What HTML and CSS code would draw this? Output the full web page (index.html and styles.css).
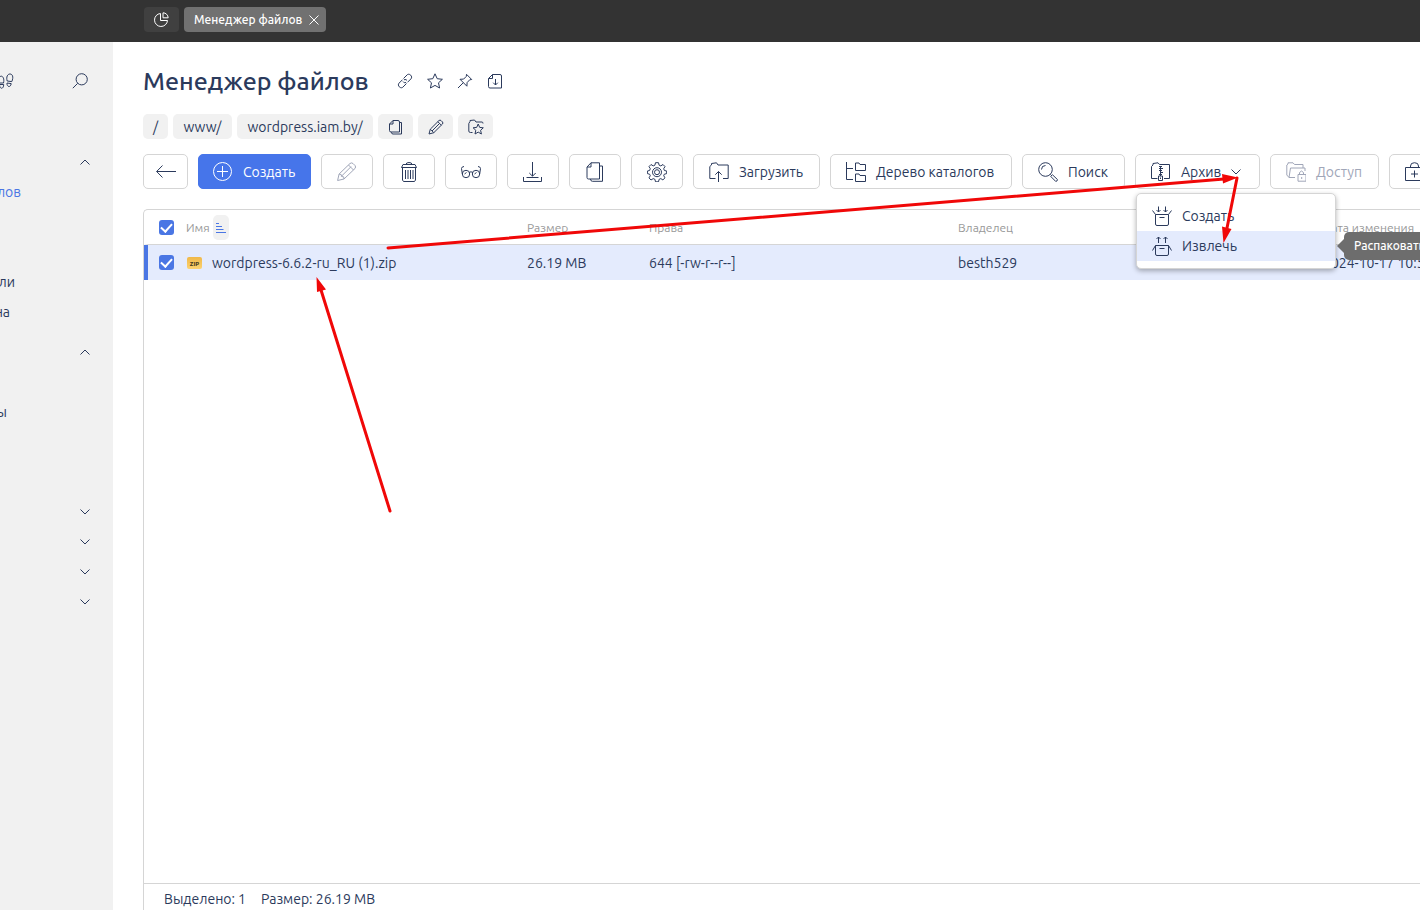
FILE: index.html
```html
<!DOCTYPE html>
<html lang="ru">
<head>
<meta charset="utf-8">
<title>Менеджер файлов</title>
<link rel="stylesheet" href="styles.css">
</head>
<body>
<header class="topbar">
  <button class="tab tab-home" aria-label="Панель"><svg class="ic16" viewBox="0 0 16 16"><path d="M7.500 1.500A6.500 6.500 0 1 0 14.500 8.500H7.500Z"/><path d="M10 .8V5.800H15.200A5.200 5.200 0 0 0 10 .8Z"/></svg></button>
  <button class="tab tab-active">Менеджер файлов <svg class="ic10" viewBox="0 0 10 10"><path d="M.5.5l9 9M9.500.5l-9 9"/></svg></button>
</header>
<div class="layout">
  <nav class="sidebar" aria-label="Меню">
    <div class="side-head">
      <a href="#" class="steps" aria-label="История"><svg class="ic16" viewBox="0 0 16 16"><path d="M1 5C3 1 7 4 5.500 10H1.500ZM1.500 11.500h4.200c0 5-4.200 5-4.200 0Z"/><path d="M9.200 8C8 4 9.500 1 12 1s3.800 3 1.800 7.600ZM9 10l4.200.6c-.5 4.400-4.700 3.400-4.200-.6Z"/></svg></a>
      <button class="plain" aria-label="Поиск по меню"><svg class="ic16" viewBox="0 0 16 16"><circle cx="9.700" cy="6.300" r="5.600"/><path d="M5.700 10.300L.8 15.200"/></svg></button>
    </div>
    <div class="side-row"><button class="plain" aria-label="Свернуть"><svg class="chev" viewBox="0 0 10 6"><path d="M.5 5.500L5 1l4.500 4.500"/></svg></button></div>
    <div class="side-row"><a href="#" class="side-link current">лов</a></div>
    <div class="side-row"></div>
    <div class="side-row"></div>
    <div class="side-row"><a href="#" class="side-link w15">ли</a></div>
    <div class="side-row"><a href="#" class="side-link w10">на</a></div>
    <div class="side-row group"><button class="plain" aria-label="Свернуть"><svg class="chev" viewBox="0 0 10 6"><path d="M.5 5.500L5 1l4.500 4.500"/></svg></button></div>
    <div class="side-row"></div>
    <div class="side-row"><a href="#" class="side-link w7">ы</a></div>
    <div class="side-row"></div>
    <div class="side-row"></div>
    <div class="side-row group"><button class="plain" aria-label="Развернуть"><svg class="chev" viewBox="0 0 10 6"><path d="M.5.5L5 5 9.500.5"/></svg></button></div>
    <div class="side-row"><button class="plain" aria-label="Развернуть"><svg class="chev" viewBox="0 0 10 6"><path d="M.5.5L5 5 9.500.5"/></svg></button></div>
    <div class="side-row"><button class="plain" aria-label="Развернуть"><svg class="chev" viewBox="0 0 10 6"><path d="M.5.5L5 5 9.500.5"/></svg></button></div>
    <div class="side-row"><button class="plain" aria-label="Развернуть"><svg class="chev" viewBox="0 0 10 6"><path d="M.5.5L5 5 9.500.5"/></svg></button></div>
  </nav>
  <main class="content">
    <div class="title-row">
      <h1>Менеджер файлов</h1>
      <div class="title-icons">
        <button class="plain" aria-label="Ссылка"><svg class="ic16" viewBox="0 0 16 16"><path d="M6.500 5.500L10 2c2-2.400 6.200 1.300 4 3.800L10.500 9.300M9.500 10.500L6 14c-2 2.400-6.200-1.300-4-3.800L5.500 6.700M6 8.500Q7 10.500 9 9.500M7 6.700Q9.500 6 10 7.500"/></svg></button>
        <button class="plain" aria-label="В избранное"><svg class="ic16" viewBox="0 0 16 16"><path d="M8 .8l2.200 4.900 5.200.6-3.900 3.500 1.100 5.200L8 12.400 3.400 15l1.100-5.200L.6 6.300l5.200-.6Z"/></svg></button>
        <button class="plain" aria-label="Закрепить"><svg class="ic16" viewBox="0 0 16 16"><path d="M9.500 1.300l5.200 5.200-2 .3-2.600 2.800-.2 3.600L3 6.300l3.600-.2 2.700-2.700ZM6.300 9.700L1 15"/></svg></button>
        <button class="plain" aria-label="Сохранить"><svg class="ic16" viewBox="0 0 16 16"><path d="M5.500 1.500H13q1.500 0 1.500 1.500V15H3q-1.500 0-1.500-1.500V5.500ZM5.500 1.500V5.500H1.500M8.500 6v6M6.200 9.700L8.500 12l2.300-2.300"/></svg></button>
      </div>
    </div>
    <div class="crumbs">
      <a href="#" class="crumb">/</a>
      <a href="#" class="crumb c-www">www/</a>
      <a href="#" class="crumb c-site">wordpress.iam.by/</a>
      <button class="crumb c-icon" aria-label="Копировать путь"><svg class="ic16" viewBox="0 0 16 16"><path d="M5 1.500h5q1.500 0 1.500 1.500v10H3q-1.500 0-1.500-1.500V5ZM5 1.500V5H1.500M11.500 3.500h2V15H5q-1.500 0-1.500-1.500V13"/></svg></button>
      <button class="crumb c-icon" aria-label="Изменить путь"><svg class="ic16" viewBox="0 0 16 16"><path d="M1 15l1.300-4.800L11 1.500q1-.8 2 0L14.500 3q.8 1 0 2L5.800 13.700ZM2.300 10.200l3.500 3.500M9.800 2.700l3.500 3.500M4 12L11.500 4.500"/></svg></button>
      <button class="crumb c-icon" aria-label="Избранные папки"><svg class="ic16" viewBox="0 0 16 16"><path d="M4.500 13.500H2.500Q.8 13.500.8 12V4.500L2 2.500V1.500L6.500 1 8 3h6q1 0 1 1.500M10.200 5l1.500 3.400 3.600.4-2.700 2.500.8 3.700-3.200-1.900L7 15l.8-3.700L5.100 8.800l3.600-.4Z"/></svg></button>
    </div>
    <div class="toolbar">
      <button class="btn b-back" aria-label="Назад"><svg class="ic20" viewBox="0 0 20 20"><path d="M20 9.500H.8M6.500 3.500L.6 9.500l5.900 6"/></svg></button>
      <button class="btn primary b-create"><svg class="ic20" viewBox="0 0 20 20"><circle cx="9.500" cy="9.500" r="9"/><path d="M9.500 4v11M4 9.500h11"/></svg>Создать</button>
      <button class="btn b-icon" disabled aria-label="Изменить"><svg class="ic20" viewBox="0 0 20 20"><path d="M.6 18.500l1.500-6.500L13 1.500q1.500-1.200 3 0l2 2q1.200 1.500 0 3L7 17ZM2.100 12q3 0 2.500 2.500 3-.5 2.400 2.500M11.500 3l5 5M4.500 14.200l9.500-9.500"/></svg></button>
      <button class="btn b-icon" aria-label="Удалить"><svg class="ic20" viewBox="0 0 20 20"><path d="M2.500 5.500L4 2.500h12l1.500 3ZM7 2.500Q7 .5 10 .5t3 2M3.500 5.500V18l1 1.500h11l1-1.500V5.500M6.500 8v9M9 8v9M11.500 8v9M14 8v9"/></svg></button>
      <button class="btn b-icon" aria-label="Просмотр"><svg class="ic20" viewBox="0 0 20 20"><circle cx="5" cy="12" r="3.700"/><circle cx="15" cy="12" r="3.700"/><path d="M1.300 12L.5 6.500Q.8 4.500 3 4.500M18.700 12l.8-5.500Q19.200 4.500 17 4.500M8.200 10.500Q10 9 11.800 10.500M3.500 12L5.500 10.500M13.500 12l2-1.500"/></svg></button>
      <button class="btn b-icon" aria-label="Скачать"><svg class="ic20" viewBox="0 0 20 20"><path d="M9.500 0v14M6.300 11l3.200 3.200L12.700 11M.5 15v4.500h18V15M3.500 15.500h12"/></svg></button>
      <button class="btn b-icon" aria-label="Копировать"><svg class="ic20" viewBox="0 0 20 20"><path d="M6 .8h8.500V17H3.500Q2 17 2 15.500V5ZM6 .8V5H2M14.500 4H17.500V19.300H7.500Q5.500 19.300 5.500 17"/></svg></button>
      <button class="btn b-icon" aria-label="Атрибуты"><svg class="ic20" viewBox="0 0 20 20"><path d="M8.500.7h3l.6 2.500 1.700.7 2.200-1.400L18 4.600l-1.300 2.100.7 1.800 2.300.5v2.600l-2.400.6-.6 1.500 1.300 2.100-2.100 2.100-2.100-1.300-1.700.7-.6 2.500h-3l-.6-2.500-1.700-.7-2.200 1.400L2 15.900l1.300-2.200-.7-1.500L.4 11.600V9l2.200-.5.7-1.800L2 4.600l2-2.100 2.200 1.400 1.700-.7Z"/><circle cx="10" cy="10.200" r="4.500"/><circle cx="10" cy="10.200" r="2.500"/></svg></button>
      <button class="btn b-upload"><svg class="ic20" viewBox="0 0 20 20"><path d="M6.500 16.500H.8V4.500L2.500 3V1.500l5-.7L9 3h10.200v13.500H14M9.500 20V9.500M6.300 12.700L9.500 9.500l3.200 3.200"/></svg>Загрузить</button>
      <button class="btn b-tree"><svg class="ic20" viewBox="0 0 20 20"><path d="M.5 0v17.500H7M.5 6.500H7M9.500 1h3.500l1 1.500h5.500V8.500H9.500ZM9.500 12h3.500l1 1.500h5.500v6H9.500Z"/></svg>Дерево каталогов</button>
      <button class="btn b-search"><svg class="ic20" viewBox="0 0 20 20"><circle cx="7.500" cy="7.500" r="6.800"/><path d="M3.500 7.500a4 4 0 0 1 4-4M12.400 12.400l1.400 1.400M14.500 12.800l5 4.800q0 1.600-1.800 1.800l-5-5Z"/></svg>Поиск</button>
      <div class="drop">
        <button class="btn b-archive" aria-expanded="true"><svg class="ic20" viewBox="0 0 20 20"><path d="M6.500 16.500H.5V4.500L2 3V1.500l5-.7L8.500 2.500H18.500v14H13M8 4.500h3M8 6.500h4M8 8.500h3M9 10.500h3M8 12.500h3M9.500 4v10M7.500 14h4v4.500h-4ZM9.500 15.500v1.500"/></svg>Архив <svg class="chev" viewBox="0 0 10 6"><path d="M.5.5L5 5 9.500.5"/></svg></button>
        <div class="menu" role="menu">
          <button class="item" role="menuitem"><svg class="ic20" viewBox="0 0 20 20"><path d="M3.500 8.500h13V18q0 1.500-1.500 1.500H5Q3.500 19.500 3.500 18ZM3.500 8.500L.5 4.500M16.500 8.500l3-4M7.500 11.500h5M6.500.5V6M4.500 4l2 2 2-2M13.500.5V6M11.500 4l2 2 2-2"/></svg>Создать</button>
          <button class="item hover" role="menuitem"><svg class="ic20" viewBox="0 0 20 20"><path d="M3.500 9.500h13V18q0 1.500-1.500 1.500H5Q3.500 19.500 3.500 18ZM3.500 9.500L.5 14.500M16.500 9.500l3 5M7.500 12.500h5M6.500 7V1M4.500 3l2-2 2 2M13.500 7V1M11.500 3l2-2 2 2"/></svg>Извлечь</button>
          <span class="tip" role="tooltip">Распаковать</span>
        </div>
      </div>
      <button class="btn b-access" disabled><svg class="ic20" viewBox="0 0 20 20"><path d="M9 15.500H3L.8 13V3L2 2V.8h5L8.500 2.500H17V6M3 15.500L4.500 6H19V9M12 12.500h8v6.700H12ZM13.500 12.500v-2q2-3 4 0v2M15.700 15v2"/></svg>Доступ</button>
      <button class="btn b-last" aria-label="Добавить"><svg class="ic20" viewBox="0 0 20 20"><path d="M.5 5.500h18v13H.5ZM5.500 5.500V4q0-3.300 4-3.300T13.500 4v1.500M9.500 8.500v7M6 12h7"/></svg></button>
    </div>
    <section class="panel">
      <div class="table-area">
        <table>
          <colgroup><col class="col-name"><col class="col-size"><col class="col-rights"><col class="col-owner"><col></colgroup>
          <thead><tr>
            <th><div class="name-cell"><input type="checkbox" checked aria-label="Выбрать все"><span class="sort-label">Имя <span class="sort"><svg viewBox="0 0 10 12"><path d="M0 1.500h3M0 4.500h6M0 7.500h7.500M0 10.500h10"/></svg></span></span></div></th>
            <th>Размер</th><th>Права</th><th>Владелец</th><th>Дата изменения</th>
          </tr></thead>
          <tbody><tr>
            <td><div class="name-cell"><input type="checkbox" id="file1" checked><span class="zip" aria-hidden="true">ZIP</span><label for="file1">wordpress-6.6.2-ru_RU (1).zip</label></div></td>
            <td>26.19 MB</td><td>644 [-rw-r--r--]</td><td>besth529</td><td>2024-10-17 10:5</td>
          </tr></tbody>
        </table>
      </div>
      <footer class="status"><span>Выделено: 1</span><span>Размер: 26.19 MB</span></footer>
    </section>
  </main>
</div>
<svg class="arrows" aria-hidden="true">
  <path class="line" d="M388 248L1224 179M1237 178L1227 228M390 511L321 290"/>
  <path class="head" d="M1238 177.500L1222 174L1223 183.500ZM1223.500 243L1222 226.500L1231.500 229ZM316.500 277L317 292L326 289.500Z"/>
</svg>
</body>
</html>
```
FILE: styles.css
```css
* { box-sizing: border-box; }

body {
  margin: 0;
  height: 100vh;
  display: flex;
  flex-direction: column;
  overflow: hidden;
  position: relative;
  background: #fff;
  color: #2b3a5c;
  font: 14px/20px "Ubuntu", "Noto Sans", sans-serif;
}

button { font: inherit; color: inherit; margin: 0; cursor: pointer; }
a { color: inherit; text-decoration: none; }

svg { flex: none; fill: none; stroke: currentColor; stroke-linejoin: round; }
.ic10 { width: 10px; height: 10px; }
.ic16 { width: 16px; height: 16px; }
.ic20 { width: 20px; height: 20px; }
.chev { width: 10px; height: 6px; }

.plain { display: flex; padding: 0; border: 0; background: none; }

/* Top bar */
.topbar {
  flex: none;
  height: 42px;
  display: flex;
  align-items: flex-start;
  gap: 5px;
  padding: 7px 0 0 144px;
  background: #333;
}
.tab {
  display: flex;
  align-items: center;
  justify-content: space-between;
  height: 25px;
  padding: 0 7px 0 10px;
  border: 0;
  border-radius: 4px;
  color: #fff;
}
.tab-home { width: 35px; padding: 0 9px; background: #404040; }
.tab-active { width: 142px; background: #717171; font-size: 12px; font-weight: 500; white-space: nowrap; }

.layout { flex: 1; min-height: 0; display: flex; }

/* Side menu */
.sidebar { flex: none; width: 113px; background: #f1f1f1; overflow: hidden; }
.side-head {
  display: flex;
  align-items: center;
  justify-content: space-between;
  height: 78px;
  padding-right: 25px;
  margin-bottom: 27px;
}
.steps { display: flex; margin-left: -2px; }
.side-row {
  display: flex;
  align-items: center;
  height: 30px;
}
.side-row .plain { margin-left: auto; margin-right: 23px; }
.side-row.group { margin-top: 10px; }
.side-link { display: flex; justify-content: flex-end; width: 21px; }
.w15 { width: 15px; }
.w10 { width: 10px; }
.w7 { width: 7px; }
.current { color: #4a76e4; }

/* Content */
.content { flex: 1; min-width: 0; display: flex; flex-direction: column; padding: 23px 0 0 30px; }
.title-row { display: flex; align-items: center; gap: 25px; height: 32px; }
h1 { margin: 0; font-size: 25px; line-height: 32px; font-weight: 500; white-space: nowrap; -webkit-text-stroke: 0 currentColor; padding-right: 3px; }
.title-icons { display: flex; gap: 14px; }

.crumbs { display: flex; gap: 5px; margin-top: 17px; }
.crumb {
  display: flex;
  align-items: center;
  justify-content: center;
  width: 25px;
  height: 25px;
  padding: 0;
  border: 0;
  border-radius: 5px;
  background: #f1f1f1;
}
.c-www { width: 59px; }
.c-site { width: 136px; }
.c-icon { width: 35px; }

.toolbar { display: flex; gap: 10px; margin-top: 15px; }
.btn {
  flex: none;
  display: flex;
  align-items: center;
  gap: 10px;
  height: 35px;
  padding: 0 15px;
  border: 1px solid #d5d5d5;
  border-radius: 5px;
  background: #fff;
  white-space: nowrap;
}
.btn:disabled { color: #a0a6b8; }
.primary { background: #4675ea; border-color: #4675ea; color: #fff; }
.b-back { width: 45px; padding: 0 12px; }
.b-icon { width: 52px; }
.b-create { width: 113px; padding: 0 14px; }
.b-upload { width: 127px; }
.b-tree { width: 182px; }
.b-search { width: 103px; }
.b-archive { width: 125px; }
.b-access { width: 109px; }
.b-last { width: 52px; }

.drop { flex: none; position: relative; }
.menu {
  position: absolute;
  z-index: 2;
  top: 39px;
  left: 1px;
  width: 200px;
  padding: 7px 0;
  border: 1px solid #d5d5d5;
  border-radius: 5px;
  background: #fff;
  box-shadow: 0 2px 5px rgba(0, 0, 0, .3);
}
.item {
  display: flex;
  align-items: center;
  gap: 10px;
  width: 100%;
  height: 30px;
  padding: 0 15px;
  border: 0;
  background: none;
}
.hover { background: #e4ebfd; }
.tip {
  position: absolute;
  left: 207px;
  bottom: 8px;
  height: 28px;
  padding: 0 10px;
  border-radius: 5px;
  background: #6d6d6d;
  color: #fff;
  font-size: 12px;
  line-height: 28px;
  font-weight: 500;
}
.tip::before {
  content: "";
  position: absolute;
  left: -7px;
  top: 7px;
  border: 7px solid transparent;
  border-left: 0;
  border-right-color: #6d6d6d;
}

/* File table */
.panel {
  flex: 1;
  min-height: 0;
  display: flex;
  flex-direction: column;
  margin-top: 20px;
  border: 1px solid #d5d5d5;
  border-width: 1px 0 0 1px;
  border-top-left-radius: 5px;
}
.table-area { flex: 1; min-height: 0; overflow: hidden; }
table { width: 100%; table-layout: fixed; border-collapse: separate; border-spacing: 0; }
.col-name { width: 383px; }
.col-size { width: 122px; }
.col-rights { width: 309px; }
.col-owner { width: 365px; }
th, td { height: 35px; padding: 0; text-align: left; white-space: nowrap; }
th { padding-top: 1px; border-bottom: 1px solid #d5d5d5; color: #999; font-size: 12px; font-weight: 400; }
td { background: #e4ebfd; }
td:first-child { border-left: 4px solid #4a76e4; }
th:first-child { border-left: 4px solid transparent; }
.name-cell { display: flex; align-items: center; padding-left: 11px; }
.sort-label { display: flex; align-items: center; gap: 3px; margin-left: 12px; }
.sort { display: flex; align-items: center; justify-content: center; width: 16px; height: 25px; border-radius: 5px; background: #f1f1f1; color: #4a76e4; }
.sort svg { width: 10px; height: 12px; }
input[type="checkbox"] {
  appearance: none;
  flex: none;
  display: grid;
  place-items: center;
  width: 15px;
  height: 15px;
  margin: 0;
  border-radius: 3px;
  background: #4a76e4;
}
input[type="checkbox"]:checked::before {
  content: "";
  width: 5px;
  height: 9px;
  margin-bottom: 2px;
  border: solid #fff;
  border-width: 0 2px 2px 0;
  transform: rotate(42deg);
}
.zip {
  width: 15px;
  height: 12px;
  margin: 0 10px 0 13px;
  border-radius: 2px;
  background: linear-gradient(#f0b848, #fbd271);
  color: #453a20;
  font-size: 6px;
  line-height: 13px;
  font-weight: 800;
  text-align: center;
}
.status { display: flex; gap: 15px; height: 27px; padding: 5px 0 0 20px; border-top: 1px solid #d5d5d5; }

.arrows { position: absolute; inset: 0; z-index: 3; width: 100%; height: 100%; pointer-events: none; }
.line { stroke: #f00808; stroke-width: 3; stroke-linecap: round; }
.head { fill: #f00808; stroke: none; }
```
